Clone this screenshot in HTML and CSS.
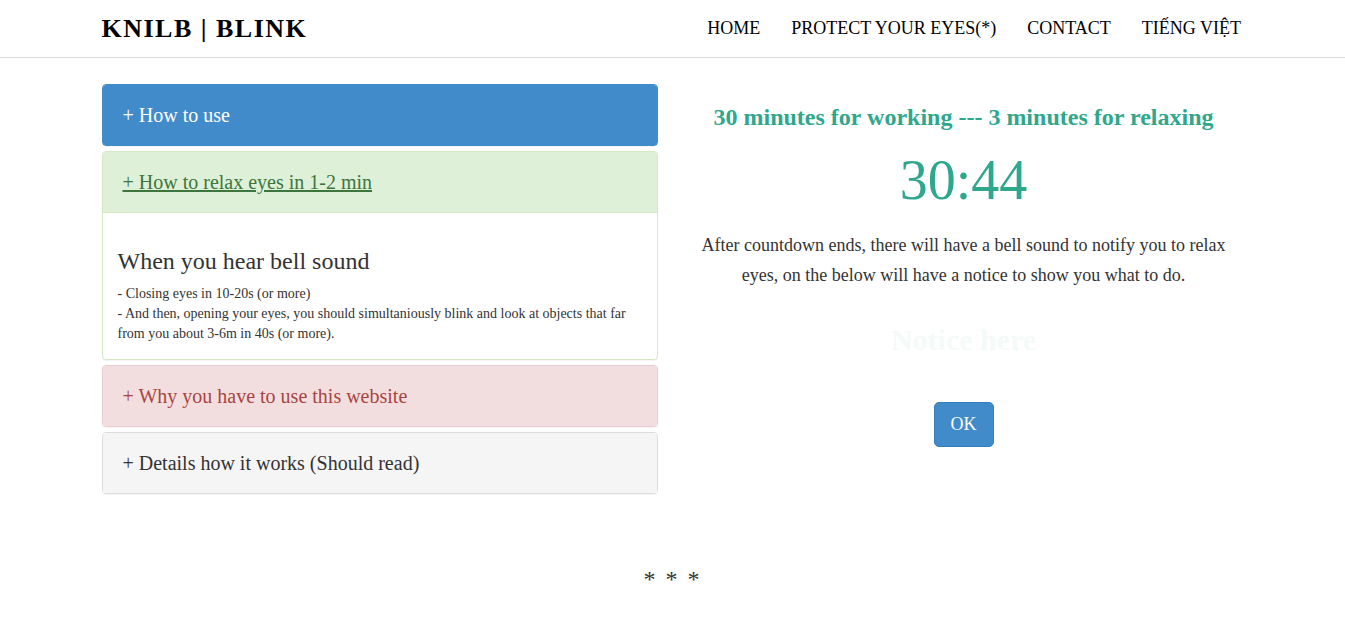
FILE: index.html
```html
<!DOCTYPE html>
<html lang="en">
<head>
    <meta charset="UTF-8">
    <meta name="viewport" content="width=device-width, initial-scale=1.0">
    <title>KNILB | BLINK</title>
    <link rel="stylesheet" href="styles.css">
</head>
<body>
    <nav class="navbar">
        <div class="container navbar-inner">
            <a class="brand" href="#">KNILB | BLINK</a>
            <ul class="nav-links">
                <li><a href="#">HOME</a></li>
                <li><a href="#">PROTECT YOUR EYES(*)</a></li>
                <li><a href="#">CONTACT</a></li>
                <li><a href="#">TIẾNG VIỆT</a></li>
            </ul>
        </div>
    </nav>

    <div class="container main">
        <div class="panel-group">
            <div class="panel panel-primary">
                <div class="panel-heading">+ How to use</div>
            </div>
            <div class="panel panel-success">
                <div class="panel-heading"><a href="#">+ How to relax eyes in 1-2 min</a></div>
                <div class="panel-body">
                    <h3>When you hear bell sound</h3>
                    <p>- Closing eyes in 10-20s (or more)<br>
                    - And then, opening your eyes, you should simultaniously blink and look at objects that far from you about 3-6m in 40s (or more).</p>
                </div>
            </div>
            <div class="panel panel-danger">
                <div class="panel-heading">+ Why you have to use this website</div>
            </div>
            <div class="panel panel-default">
                <div class="panel-heading">+ Details how it works (Should read)</div>
            </div>
        </div>

        <div class="timer-box">
            <h3 class="timer-title">30 minutes for working --- 3 minutes for relaxing</h3>
            <div class="timer" id="timer">30:44</div>
            <p class="timer-note">After countdown ends, there will have a bell sound to notify you to relax eyes, on the below will have a notice to show you what to do.</p>
            <div class="notice">Notice here</div>
            <button class="btn-ok">OK</button>
        </div>
    </div>

    <div class="stars">* * *</div>
</body>
</html>
```

FILE: styles.css
```css
* {
    margin: 0;
    padding: 0;
    box-sizing: border-box;
}

body {
    font-family: 'Liberation Serif', 'Times New Roman', serif;
    font-size: 14px;
    line-height: 1.42857;
    color: #333;
    background-color: white;
}

a {
    color: inherit;
    text-decoration: none;
}

.container {
    width: 1170px;
    margin: 0 auto;
    padding: 0 15px;
}

/* Thanh điều hướng */
.navbar {
    border-bottom: 1px solid #ddd;
    height: 58px;
}

.navbar-inner {
    display: flex;
    justify-content: space-between;
    align-items: center;
    height: 57px;
}

.brand {
    font-size: 26px;
    font-weight: bold;
    letter-spacing: 1.5px;
    color: #000;
    padding-top: 1px;
    margin-left: -1px;
}

.nav-links {
    display: flex;
    list-style: none;
    margin-right: -14px;
}

.nav-links a {
    display: block;
    padding: 0 15.5px;
    font-size: 18px;
    color: #000;
}

.main {
    display: grid;
    grid-template-columns: 555px 555px;
    column-gap: 30px;
    padding-top: 26px;
}

/* Panels */
.panel {
    border: 1px solid transparent;
    border-radius: 4px;
    background-color: white;
    box-shadow: 0 1px 1px rgba(0,0,0,0.05);
}

.panel-group {
    margin-left: -1px;
}

.panel + .panel {
    margin-top: 5px;
}

.panel-heading {
    padding: 19px 20px;
    font-size: 20px;
    line-height: 22px;
    border-radius: 3px 3px 0 0;
}

.panel-primary {
    border-color: #428bca;
}

.panel-primary .panel-heading {
    background-color: #428bca;
    color: white;
}

.panel-success {
    border-color: #d6e9c6;
}

.panel-success .panel-heading {
    background-color: #dff0d8;
    color: #3c763d;
    border-bottom: 1px solid #d6e9c6;
}

.panel-success .panel-heading a {
    text-decoration: underline;
}

.panel-danger {
    border-color: #ebccd1;
}

.panel-danger .panel-heading {
    background-color: #f2dede;
    color: #a94442;
}

.panel-default {
    border-color: #ddd;
}

.panel-default .panel-heading {
    background-color: #f5f5f5;
    color: #333;
}

.panel-body {
    padding: 15px;
}

.panel-body h3 {
    font-size: 24px;
    font-weight: normal;
    line-height: 1.1;
    margin: 20px 0 10px;
}

/* Đồng hồ đếm ngược */
.timer-box {
    text-align: center;
    padding-right: 3px;
}

.timer-title {
    font-size: 24px;
    line-height: 1.1;
    color: #2fa78c;
    margin-top: 20px;
}

.timer {
    font-size: 56px;
    line-height: 1.1;
    color: #2fa78c;
    margin-top: 20px;
}

.timer-note {
    font-size: 18px;
    line-height: 30px;
    margin-top: 18px;
}

.notice {
    font-size: 30px;
    font-weight: bold;
    line-height: 1.1;
    color: #f3faf8;
    margin-top: 33px;
}

.btn-ok {
    margin-top: 46px;
    padding: 10px 16px;
    font-family: inherit;
    font-size: 18px;
    line-height: 23px;
    color: white;
    background-color: #428bca;
    border: 1px solid #357ebd;
    border-radius: 5px;
    cursor: pointer;
}

.stars {
    text-align: center;
    font-size: 24px;
    letter-spacing: 2px;
    margin-top: 68px;
    color: #333;
}
```
